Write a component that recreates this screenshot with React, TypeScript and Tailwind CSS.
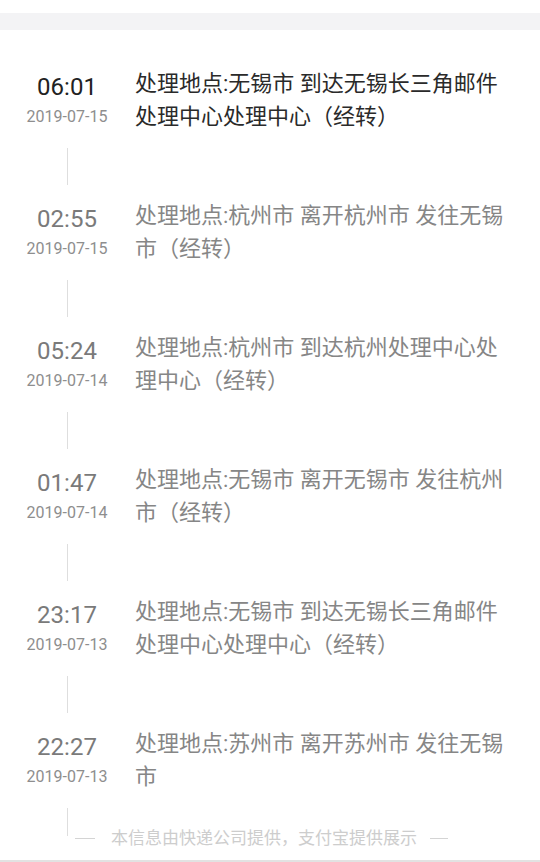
import React from "react";

type Item = { time: string; date: string; text: string; active?: boolean };

const items: Item[] = [
  { time: "06:01", date: "2019-07-15", text: "处理地点:无锡市 到达无锡长三角邮件处理中心处理中心（经转）", active: true },
  { time: "02:55", date: "2019-07-15", text: "处理地点:杭州市 离开杭州市 发往无锡市（经转）" },
  { time: "05:24", date: "2019-07-14", text: "处理地点:杭州市 到达杭州处理中心处理中心（经转）" },
  { time: "01:47", date: "2019-07-14", text: "处理地点:无锡市 离开无锡市 发往杭州市（经转）" },
  { time: "23:17", date: "2019-07-13", text: "处理地点:无锡市 到达无锡长三角邮件处理中心处理中心（经转）" },
  { time: "22:27", date: "2019-07-13", text: "处理地点:苏州市 离开苏州市 发往无锡市" },
];

export default function App() {
  return (
    <div
      className="w-[540px] h-[862px] bg-white overflow-hidden"
      style={{ fontFamily: 'Roboto, "Noto Sans CJK SC", "Noto Sans", sans-serif' }}
    >
      <div className="h-[13px] bg-white" />
      <div className="h-[17px] bg-[#f3f3f5]" />
      <div className="pt-[37px]">
        {items.map((it, i) => {
          const last = i === items.length - 1;
          return (
            <div key={i}>
              <div className="grid grid-cols-[134px_1fr]">
                <div className="flex flex-col items-center pt-[5px]">
                  <div
                    className={
                      "text-[24px] leading-[30px] " +
                      (it.active ? "text-[#222222]" : "text-[#7a7a7a]")
                    }
                  >
                    {it.time}
                  </div>
                  <div className="text-[16px] leading-[30px] text-[#8e8e8e]">{it.date}</div>
                </div>
                <div
                  className={
                    "pl-[1px] pr-[30px] text-[22px] leading-[33px] " +
                    (it.active ? "text-[#2a2a2a]" : "text-[#868686]")
                  }
                >
                  {it.text}
                </div>
              </div>
              <div className={"w-[134px] flex justify-center mt-[15px] " + (last ? "" : "mb-[14px]")}>
                <div className={"w-px bg-[#dedede] " + (last ? "h-[28px]" : "h-[37px]")} />
              </div>
            </div>
          );
        })}
        <div className="-mt-[9px] pb-[11px] border-b-2 border-[#e2e2e2]">
          <div className="flex items-center pl-[75px] h-[22px] text-[17px] leading-[22px] text-[#cdcdcd]">
            <span className="w-[20px] h-px bg-[#d4d4d4]" />
            <span className="ml-[16px] mr-[13px]">本信息由快递公司提供，支付宝提供展示</span>
            <span className="w-[18px] h-px bg-[#d4d4d4]" />
          </div>
        </div>
      </div>
    </div>
  );
}
